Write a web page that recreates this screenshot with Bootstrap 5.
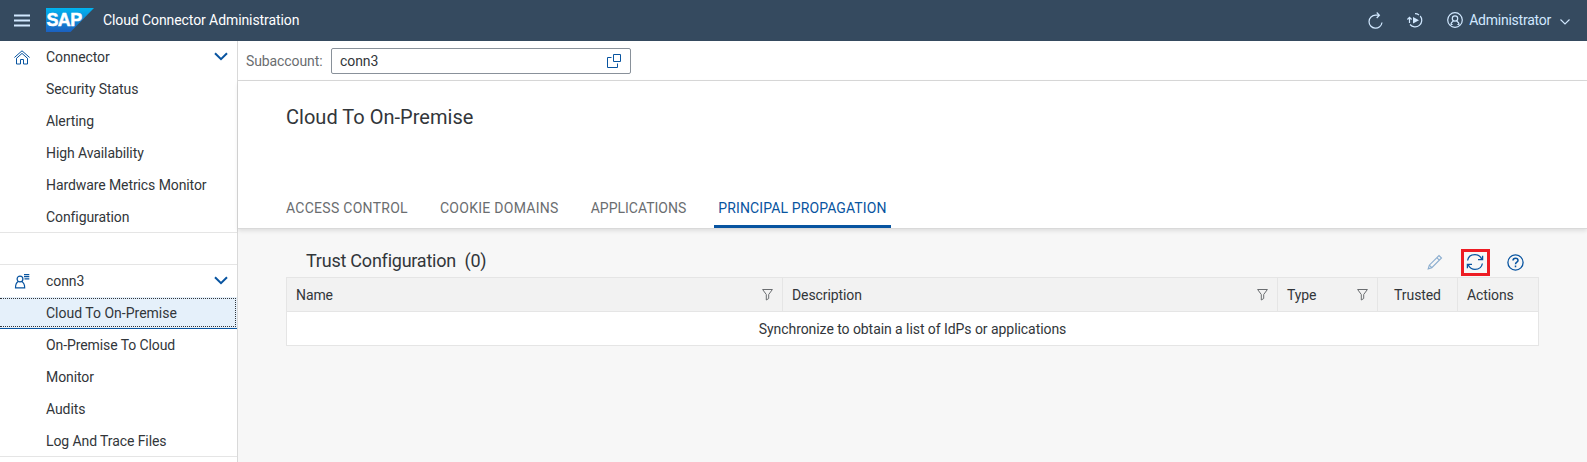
<!DOCTYPE html>
<html lang="en">
<head>
<meta charset="utf-8">
<meta name="viewport" content="width=device-width, initial-scale=1">
<title>Cloud Connector Administration</title>
<link href="https://cdn.jsdelivr.net/npm/bootstrap@5.3.0/dist/css/bootstrap.min.css" rel="stylesheet">
<style>
  body { font-family: Roboto, "Liberation Sans", sans-serif; font-size: 14px; line-height: 20px; color: #32363a; letter-spacing: -.09px; height: 100vh; overflow: hidden; background: #f7f7f7; }
  svg { display: block; flex: none; fill: none; stroke: currentColor; }
  a { color: inherit; text-decoration: none; }

  /* shell bar */
  .shell { height: 41px; background: #354a5f; color: #d1e8ff; padding: 0 17px 2px 14px; }
  .shell-title { color: #fff; margin-left: 9px; }
  .menu-icon { margin-top: 1px; }
  .sap-logo { margin: 0 0 0 16px; }
  .sap-logo text { font: bold 18px "Liberation Sans", sans-serif; fill: #fff; stroke: #fff; stroke-width: .5; letter-spacing: -.6px; }
  .shell-tools { gap: 24px; }
  .user-name { letter-spacing: -.24px; margin: 0 9px 0 6px; }

  /* side navigation */
  .side { width: 238px; flex: none; background: #fff; border-right: 1px solid #d9d9d9; }
  .side-item { height: 32px; padding: 0 9px 0 46px; }
  .side-item:last-child { height: 31px; }
  .side-head { padding-left: 14px; }
  .side-head .head-icon { width: 32px; color: #0854a0; }
  .side-head .chev { color: #0854a0; margin-bottom: 2px; }
  .side-group { border-bottom: 1px solid #e5e5e5; }
  .side-gap { height: 32px; border-bottom: 1px solid #e5e5e5; }
  .side-item.active { background: #e5f0fa; border-bottom: 1px solid #0854a0; padding: 1px 1px 1px 0; letter-spacing: 0; }
  .side-item.active a { border: 1px dotted #32363a; border-left: 0; padding-left: 46px; }

  /* subaccount selector */
  .subbar { height: 40px; background: #fff; border-bottom: 1px solid #d9d9d9; padding: 1px 0 0 8px; }
  .subbar label { color: #6a6d70; width: 85px; letter-spacing: -.1px; }
  .picker { width: 300px; height: 26px; border: 1px solid #89919a; border-radius: 2px; padding: 0 8px; color: #32363a; }
  .picker svg { color: #0854a0; }

  /* page header and tabs */
  .page-head { height: 148px; background: #fff; border-bottom: 1px solid #d9d9d9; padding: 22px 48px 0; box-shadow: 0 2px 4px rgba(0,0,0,.1); }
  .page-head h1 { font-size: 20px; line-height: 28px; letter-spacing: .02px; font-weight: 400; }
  .tabs { gap: 32px; color: #6a6d70; }
  .tabs .nav-link { padding: 1px 0 7px; color: inherit; line-height: 20px; letter-spacing: .28px; height: 31px; }
  .tabs .nav-link.tight { letter-spacing: 0; }
  .tabs .nav-link.active { color: #0854a0; border-bottom: 3px solid #0854a0; border-radius: 2px 2px 0 0; padding: 1px 4px 0; margin: 0 -4px; letter-spacing: .12px; }

  /* trust table */
  .trust { padding: 17px 48px 0; }
  .trust-bar { height: 31px; padding: 0 4px 0 20px; }
  .trust-bar h2 { font-size: 18px; line-height: 24px; letter-spacing: -.23px; font-weight: 400; padding-top: 3px; }
  .tool { width: 40px; height: 27px; margin-top: 3px; color: #0854a0; }
  .tool svg { margin-bottom: 1px; }
  .tool.disabled { opacity: .45; }
  .tool .marked { border: 3px solid #ed1c24; width: 29px; height: 27px; }
  .grid { border-collapse: collapse; table-layout: fixed; width: 1252px; color: #32363a; }
  .grid th, .grid td { border: 1px solid #e5e5e5; height: 34px; font-weight: 400; padding: 0 9px; line-height: 20px; }
  .grid th { background: #f2f2f2; }
  .grid td { background: #fff; text-align: center; letter-spacing: -.06px; }
  .grid svg { color: #6a6d70; }
</style>
</head>
<body class="d-flex flex-column">
<header class="shell d-flex align-items-center">
  <svg class="menu-icon" width="16" height="13" viewBox="0 0 16 13" stroke-width="2"><path d="M0 1.5H16M0 6.5H16M0 11.5H16"/></svg>
  <svg class="sap-logo" width="48" height="24" viewBox="0 0 48 24" role="img" aria-label="SAP">
    <defs><linearGradient id="sapBlue" x1="0" y1="0" x2="0" y2="1"><stop offset="0" stop-color="#00b4f0"/><stop offset="1" stop-color="#1c60c0"/></linearGradient></defs>
    <path d="M0 0H48L24.5 24H0Z" fill="url(#sapBlue)" stroke="none"/>
    <text x="0.5" y="18.3" textLength="35" lengthAdjust="spacingAndGlyphs">SAP</text>
  </svg>
  <span class="shell-title">Cloud Connector Administration</span>
  <div class="shell-tools ms-auto d-flex align-items-center">
    <svg width="16" height="18" viewBox="0 0 16 18" stroke-width="1.2"><path d="M11.500 4.200H8.500A6.500 6.500 0 1 0 15 11.500M9.700 1.500L12.400 4.200L9.700 7"/></svg>
    <svg width="16" height="16" viewBox="0 0 16 16" stroke-width="1.2"><path d="M8 1.600A6.500 6.500 0 0 1 12 2.900M13.200 4A6.500 6.500 0 1 1 3 12.500M2.500 11V5.500M.4 7.500L2.500 5.400L4.600 7.500"/><path d="M6 5L12 8.200L6 11.400Z" fill="currentColor" stroke="none"/></svg>
    <div class="d-flex align-items-center">
      <svg width="16" height="16" viewBox="0 0 16 16" stroke-width="1.2"><circle cx="8" cy="8" r="7.3"/><circle cx="8" cy="6.5" r="2.700"/><path d="M3.800 12.600C4 10.600 5.300 9.600 6.400 8.900M12.200 12.600C12 10.600 10.700 9.600 9.600 8.900M3.800 12.500H5.600M12.200 12.500H10.400"/></svg>
      <span class="user-name">Administrator</span>
      <svg class="mt-1" width="10" height="6" viewBox="0 0 10 6" stroke-width="1.1"><path d="M.5 .5L5 5L9.5 .5"/></svg>
    </div>
  </div>
</header>

<div class="d-flex flex-grow-1">
  <nav class="side">
    <div class="side-group">
      <div class="side-item side-head d-flex align-items-center">
        <span class="head-icon"><svg width="16" height="15" viewBox="0 0 16 15" stroke-width="1"><path d="M.4 7.500L8 .8L15.600 7.500M2.300 8.500L8 3.400L13.700 8.500M2.500 8.300V14H6.500V9.500H9.500V14H13.500V8.300"/></svg></span>
        <a href="#">Connector</a>
        <svg class="chev ms-auto" width="14" height="9" viewBox="0 0 14 9" stroke-width="2"><path d="M1 1.200L7 7.200L13 1.200"/></svg>
      </div>
      <div class="side-item d-flex align-items-center"><a href="#">Security Status</a></div>
      <div class="side-item d-flex align-items-center"><a href="#">Alerting</a></div>
      <div class="side-item d-flex align-items-center"><a href="#">High Availability</a></div>
      <div class="side-item d-flex align-items-center"><a href="#">Hardware Metrics Monitor</a></div>
      <div class="side-item d-flex align-items-center"><a href="#">Configuration</a></div>
    </div>
    <div class="side-gap"></div>
    <div class="side-group">
      <div class="side-item side-head d-flex align-items-center">
        <span class="head-icon"><svg width="16" height="15" viewBox="0 0 16 15" stroke-width="1.200"><circle cx="6" cy="5" r="2.900"/><path d="M4.200 7.500C2.500 8.500 1.500 10 1.500 13.900H10.700C10.700 10 9.500 8.500 7.800 7.500M10 .6H15.300M10 2.700H15.300M10.500 4.800H15.300"/></svg></span>
        <a href="#">conn3</a>
        <svg class="chev ms-auto" width="14" height="9" viewBox="0 0 14 9" stroke-width="2"><path d="M1 1.200L7 7.200L13 1.200"/></svg>
      </div>
      <div class="side-item active d-flex"><a href="#" class="d-flex align-items-center flex-grow-1">Cloud To On-Premise</a></div>
      <div class="side-item d-flex align-items-center"><a href="#">On-Premise To Cloud</a></div>
      <div class="side-item d-flex align-items-center"><a href="#">Monitor</a></div>
      <div class="side-item d-flex align-items-center"><a href="#">Audits</a></div>
      <div class="side-item d-flex align-items-center"><a href="#">Log And Trace Files</a></div>
    </div>
  </nav>

  <main class="flex-grow-1">
    <div class="subbar d-flex align-items-center">
      <label>Subaccount:</label>
      <div class="picker d-flex align-items-center justify-content-between">
        <span>conn3</span>
        <svg width="15" height="15" viewBox="0 0 15 15" stroke-width="1"><path d="M6.500 .5H13.500V7.500H6.500ZM4.500 3.500H.5V13.500H10.500V9.500"/></svg>
      </div>
    </div>
    <div class="page-head d-flex flex-column justify-content-between">
      <h1 class="m-0">Cloud To On-Premise</h1>
      <nav class="nav tabs flex-nowrap">
        <a class="nav-link" href="#">ACCESS CONTROL</a>
        <a class="nav-link" href="#">COOKIE DOMAINS</a>
        <a class="nav-link tight" href="#">APPLICATIONS</a>
        <a class="nav-link active" href="#">PRINCIPAL PROPAGATION</a>
      </nav>
    </div>
    <section class="trust">
      <div class="trust-bar d-flex">
        <h2 class="m-0">Trust Configuration&nbsp; (0)</h2>
        <div class="d-flex ms-auto">
          <span class="tool disabled d-flex align-items-center justify-content-center"><svg width="16" height="16" viewBox="0 0 16 16" stroke-width="1.100"><path d="M1.200 14.800L2.300 11.200L12 1.500L14.500 4L4.800 13.700ZM9.800 3.700L12.300 6.200M2.300 11.200L4.800 13.700"/></svg></span>
          <span class="tool d-flex align-items-center justify-content-center"><span class="marked d-flex align-items-center justify-content-center"><svg width="18" height="18" viewBox="0 0 18 18" stroke-width="1.300"><path d="M1.600 7.500C2.300 3.800 5.200 1.600 9 1.600C12 1.600 14.300 3 15.700 6M16.400 10.500C15.700 14.200 12.800 16.400 9 16.400C6 16.400 3.700 15 2.300 12M16.600 2.800V6.600H12M1.400 15.200V11.400H6"/></svg></span></span>
          <span class="tool d-flex align-items-center justify-content-center"><svg width="17" height="17" viewBox="0 0 17 17" stroke-width="1.300"><circle cx="8.500" cy="8.500" r="7.600"/><path d="M6 6.600C6 5 7 4.200 8.500 4.200S11 5 11 6.400C11 8.200 8.500 8.200 8.500 10.300M8.500 11.600V13.200" stroke-width="1.500"/></svg></span>
        </div>
      </div>
      <table class="grid">
        <colgroup><col style="width:496px"><col style="width:495px"><col style="width:100px"><col style="width:80px"><col style="width:81px"></colgroup>
        <thead><tr>
          <th><div class="d-flex align-items-center justify-content-between">Name<svg width="11" height="12" viewBox="0 0 11 12"><path d="M.6 .5H10.400L6.700 5.500V9.500L4.300 11V5.500Z"/></svg></div></th>
          <th><div class="d-flex align-items-center justify-content-between">Description<svg width="11" height="12" viewBox="0 0 11 12"><path d="M.6 .5H10.400L6.700 5.500V9.500L4.300 11V5.500Z"/></svg></div></th>
          <th><div class="d-flex align-items-center justify-content-between">Type<svg width="11" height="12" viewBox="0 0 11 12"><path d="M.6 .5H10.400L6.700 5.500V9.500L4.300 11V5.500Z"/></svg></div></th>
          <th class="text-center">Trusted</th>
          <th>Actions</th>
        </tr></thead>
        <tbody><tr><td colspan="5">Synchronize to obtain a list of IdPs or applications</td></tr></tbody>
      </table>
    </section>
  </main>
</div>
<script src="https://cdn.jsdelivr.net/npm/bootstrap@5.3.0/dist/js/bootstrap.bundle.min.js"></script>
</body>
</html>
